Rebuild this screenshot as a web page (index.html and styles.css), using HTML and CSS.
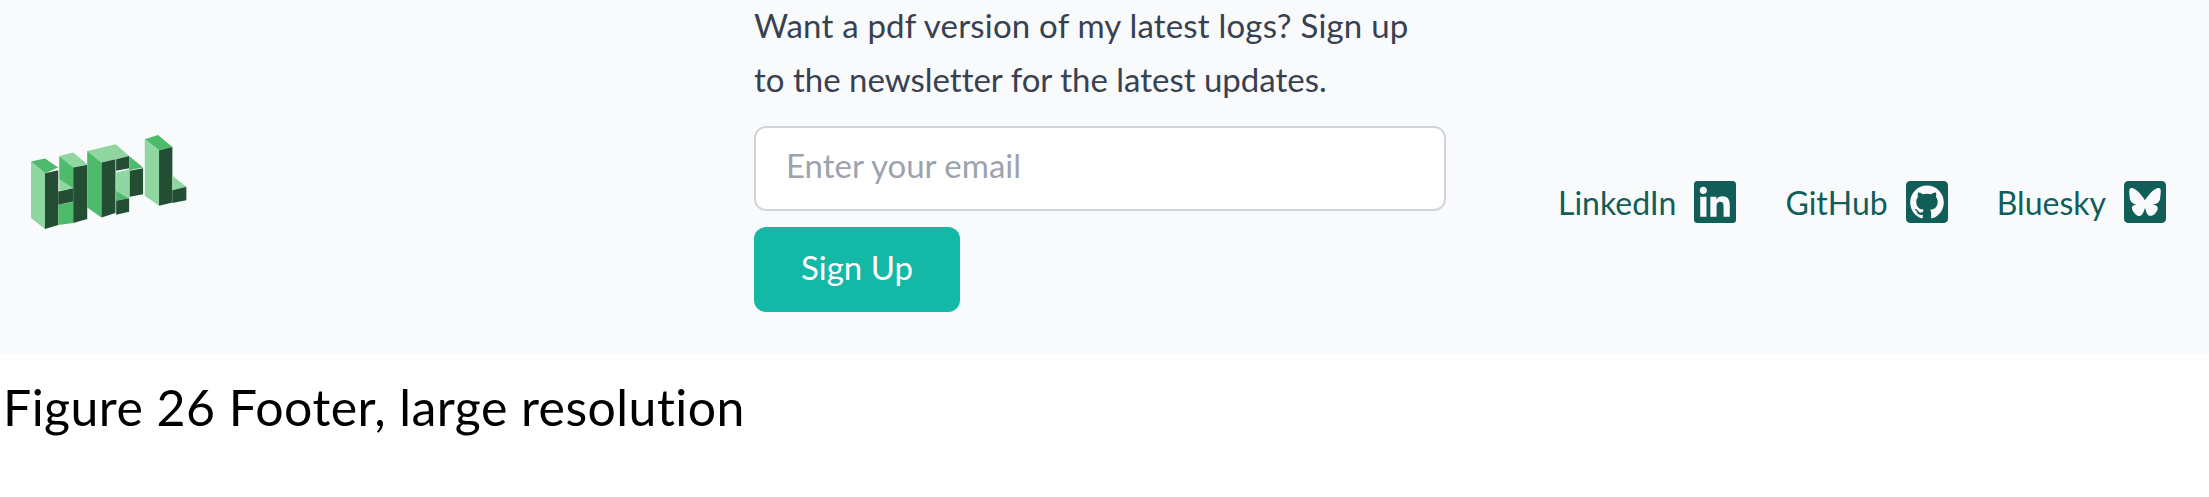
FILE: index.html
```html
<!DOCTYPE html>
<html lang="en">
  <head>
    <meta charset="UTF-8" />
    <title>Footer</title>
    <link rel="stylesheet" href="styles.css">
  </head>
  <body>
    <footer class="footer">
      <div class="logo-col">
        <svg class="logo" viewBox="90 70 475 290" aria-label="HPL logo">
          <!-- H -->
          <polygon class="mid" points="93,152 135,143 175,170 135,187" />
          <polygon class="light" points="93,152 135,187 135,355 93,322" />
          <polygon class="dark" points="135,187 175,178 175,343 135,355" />
          <polygon class="light" points="178,205 220,232 178,240" />
          <polygon class="mid" points="175,282 220,273 220,337 175,343" />
          <polygon class="dark" points="175,242 220,232 220,272 175,282" />
          <polygon class="light" points="178,135 220,125 262,160 220,170" />
          <polygon class="mid" points="178,135 220,170 220,232 178,205" />
          <polygon class="dark" points="220,170 262,162 262,325 220,337" />
          <!-- P -->
          <polygon class="light" points="262,120 348,100 388,135 305,155" />
          <polygon class="mid" points="262,120 305,155 305,320 262,290" />
          <polygon class="dark" points="305,155 347,145 347,307 305,320" />
          <polygon class="dark" points="349,145 388,135 388,172 349,180" />
          <polygon class="light" points="349,185 390,176 390,262 349,240" />
          <polygon class="mid" points="349,240 388,262 349,270" />
          <polygon class="dark" points="349,270 388,262 388,303 349,312" />
          <polygon class="mid" points="388,135 430,170 388,178" />
          <polygon class="dark" points="390,180 430,172 430,250 390,258" />
          <!-- L -->
          <polygon class="mid" points="435,85 475,72 518,108 478,118" />
          <polygon class="light" points="435,85 478,118 478,285 435,255" />
          <polygon class="dark" points="478,118 518,108 518,275 478,285" />
          <polygon class="light" points="518,195 560,228 518,238" />
          <polygon class="dark" points="518,238 560,228 560,268 518,277" />
        </svg>
      </div>

      <!-- Newsletter form -->
      <form class="signup">
        <p class="signup-text">
          <span class="line-wide">Want a pdf version of my latest logs? Sign up</span><br />
          to the newsletter for the latest updates.
        </p>
        <input class="email-input" type="email" placeholder="Enter your email" />
        <button class="signup-btn" type="button">Sign Up</button>
      </form>

      <nav class="socials">
        <a class="social-link" href="#">
          LinkedIn
          <svg class="social-icon" viewBox="0 0 24 24">
            <path d="M20.447 20.452h-3.554v-5.569c0-1.328-.027-3.037-1.852-3.037-1.853 0-2.136 1.445-2.136 2.939v5.667H9.351V9h3.414v1.561h.046c.477-.9 1.637-1.85 3.37-1.85 3.601 0 4.267 2.37 4.267 5.455v6.286zM5.337 7.433c-1.144 0-2.063-.926-2.063-2.065 0-1.138.92-2.063 2.063-2.063 1.14 0 2.064.925 2.064 2.063 0 1.139-.925 2.065-2.064 2.065zm1.782 13.019H3.555V9h3.564v11.452zM22.225 0H1.771C.792 0 0 .774 0 1.729v20.542C0 23.227.792 24 1.771 24h20.451C23.2 24 24 23.227 24 22.271V1.729C24 .774 23.2 0 22.222 0h.003z" />
          </svg>
        </a>
        <a class="social-link" href="#">
          GitHub
          <svg class="social-icon" viewBox="0 0 24 24">
            <rect width="24" height="24" rx="2.5" />
            <g transform="translate(2.4 2.4) scale(0.8)">
              <path class="glyph" d="M12 .297c-6.63 0-12 5.373-12 12 0 5.303 3.438 9.8 8.205 11.385.6.113.82-.258.82-.577 0-.285-.01-1.04-.015-2.04-3.338.724-4.042-1.61-4.042-1.61C4.422 18.07 3.633 17.7 3.633 17.7c-1.087-.744.084-.729.084-.729 1.205.084 1.838 1.236 1.838 1.236 1.07 1.835 2.809 1.305 3.495.998.108-.776.417-1.305.76-1.605-2.665-.3-5.466-1.332-5.466-5.93 0-1.31.465-2.38 1.235-3.22-.135-.303-.54-1.523.105-3.176 0 0 1.005-.322 3.3 1.23.96-.267 1.98-.399 3-.405 1.02.006 2.04.138 3 .405 2.28-1.552 3.285-1.23 3.285-1.23.645 1.653.24 2.873.12 3.176.765.84 1.23 1.91 1.23 3.22 0 4.61-2.805 5.625-5.475 5.92.42.36.81 1.096.81 2.22 0 1.606-.015 2.896-.015 3.286 0 .315.21.69.825.57C20.565 22.092 24 17.592 24 12.297c0-6.627-5.373-12-12-12" />
            </g>
          </svg>
        </a>
        <a class="social-link" href="#">
          Bluesky
          <svg class="social-icon" viewBox="0 0 24 24">
            <rect width="24" height="24" rx="2.5" />
            <g transform="translate(3 3) scale(0.75)">
              <path class="glyph" d="M12 10.8c-1.087-2.114-4.046-6.053-6.798-7.995C2.566.944 1.561 1.266.902 1.565.139 1.908 0 3.08 0 3.768c0 .69.378 5.65.624 6.479.815 2.736 3.713 3.66 6.383 3.364.136-.02.275-.039.415-.056-.138.022-.276.04-.415.056-3.912.58-7.387 2.005-2.83 7.078 5.013 5.19 6.87-1.113 7.823-4.308.953 3.195 2.05 9.271 7.733 4.308 4.267-4.308 1.172-6.498-2.74-7.078a8.741 8.741 0 0 1-.415-.056c.14.017.279.036.415.056 2.67.297 5.568-.628 6.383-3.364.246-.828.624-5.79.624-6.479 0-.688-.139-1.86-.902-2.203-.659-.299-1.664-.62-4.3 1.24C16.046 4.748 13.087 8.687 12 10.8Z" />
            </g>
          </svg>
        </a>
      </nav>
    </footer>

    <p class="caption">Figure 26 Footer, large resolution</p>
  </body>
</html>
```

FILE: styles.css
```css
body {
  margin: 0;
  background-color: #fff;
  font-family: "Lato", sans-serif;
  font-variant-ligatures: none;
}

.footer {
  display: flex;
  height: 354px;
  background-color: #f9fafb;
}

/* Logo column */
.logo-col {
  width: 724px;
  padding-left: 30px;
  display: flex;
  align-items: center;
}

.logo {
  width: 158px;
  height: 97px;
  margin-top: 10px;
}

.light {
  fill: #8fd6a0;
}

.mid {
  fill: #4dbb6b;
}

.dark {
  fill: #234e33;
}

/* Signup form */
.signup {
  width: 692px;
  display: flex;
  flex-direction: column;
  align-items: flex-start;
}

.signup-text {
  margin: -2px 0 20px;
  font-size: 33px;
  line-height: 54px;
  color: #374151;
  white-space: nowrap;
}

.line-wide {
  letter-spacing: 0.2px;
}

.email-input {
  box-sizing: border-box;
  width: 100%;
  height: 85px;
  padding: 0 30px 7px;
  border: 2px solid #d1d5db;
  border-radius: 12px;
  background-color: #fff;
  font-family: inherit;
  font-size: 33px;
}

.email-input::placeholder {
  color: #9ca3af;
  opacity: 1;
}

.signup-btn {
  width: 206px;
  height: 85px;
  margin-top: 16px;
  padding: 0 0 6px;
  border: none;
  border-radius: 12px;
  background-color: #14b8a6;
  color: #fff;
  font-family: inherit;
  font-size: 33px;
}

/* Social links */
.socials {
  flex: 1;
  display: flex;
  justify-content: flex-end;
  align-items: center;
  gap: 49px;
  margin-top: 50px;
  padding-right: 43px;
}

.social-link {
  display: flex;
  align-items: center;
  gap: 18px;
  font-size: 32px;
  color: #115e59;
  text-decoration: none;
}

.social-icon {
  width: 42px;
  height: 42px;
  fill: #115e59;
}

.glyph {
  fill: #f9fafb;
}

/* Caption under the figure */
.caption {
  margin: 13px 0 0 3px;
  font-size: 50px;
  line-height: 80px;
  letter-spacing: 0.45px;
  color: #000;
}
```
